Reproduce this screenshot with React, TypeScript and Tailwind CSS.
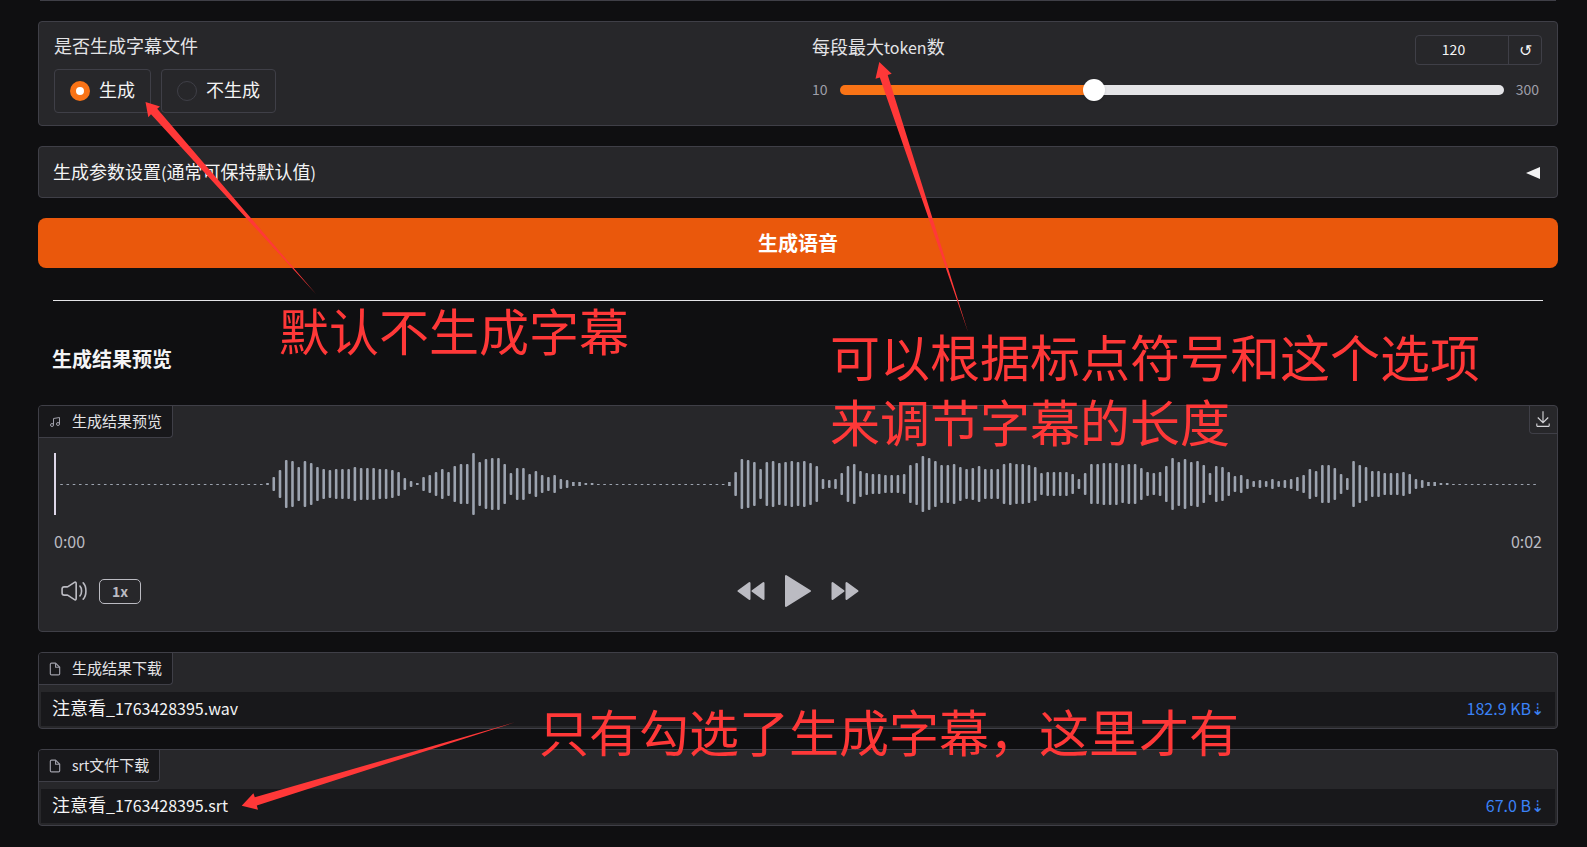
import { useState, type ReactNode } from "react";

const SILENT_HEAD = 34;
const SPEECH_A = [
  2, 14, 28, 48, 46, 34, 46, 42, 34, 30, 28, 30, 30, 30, 34, 32, 32, 32, 30, 30, 28, 24, 12, 6, 2, 14, 18, 24, 30, 24,
  36, 40, 40, 62, 44, 50, 52, 52, 40, 22, 32, 32, 20, 26, 18, 14, 18, 10, 8, 4, 4, 2, 2,
];
const SILENT_MIDDLE = 21;
const SPEECH_B = [
  4, 24, 50, 48, 44, 30, 44, 46, 42, 44, 46, 44, 46, 42, 36, 10, 8, 10, 22, 36, 40, 26, 22, 20, 20, 18, 18, 18, 20, 38,
  42, 56, 52, 46, 38, 38, 40, 34, 30, 32, 36, 30, 30, 30, 40, 42, 40, 40, 38, 34, 22, 24, 24, 24, 24, 20, 10, 22, 40,
  40, 42, 42, 42, 38, 40, 40, 32, 24, 22, 24, 36, 52, 44, 50, 44, 46, 38, 22, 36, 34, 24, 16, 18, 10, 6, 8, 6, 10, 6,
  8, 10, 14, 18, 30, 26, 38, 38, 32, 20, 12, 46, 38, 34, 26, 26, 22, 22, 22, 24, 20, 10, 8, 4, 4, 2, 2,
];
const SILENT_TAIL = 14;

const BARS: number[] = [
  ...Array<number>(SILENT_HEAD).fill(1),
  ...SPEECH_A,
  ...Array<number>(SILENT_MIDDLE).fill(1),
  ...SPEECH_B,
  ...Array<number>(SILENT_TAIL).fill(1),
];

function Waveform() {
  return (
    <svg className="block h-[62px] w-full" viewBox="0 0 1490 62" preserveAspectRatio="none" aria-hidden="true">
      {BARS.map((h, i) =>
        i === 0 ? null : (
          <rect
            key={i}
            x={6.25 * i}
            y={h === 1 ? 31 : 31 - h / 2}
            width={2.6}
            height={h}
            rx={h > 4 ? 1 : 0}
            fill="#9ca3af"
          />
        ),
      )}
      <rect x="0" y="0" width="2" height="62" fill="#ddd6e8" />
    </svg>
  );
}

function MusicIcon() {
  return (
    <svg className="size-3 text-zinc-400" viewBox="0 0 24 24" fill="none" stroke="currentColor" strokeWidth="2">
      <path d="M9 18V5l12-2v13" />
      <circle cx="6" cy="18" r="3" />
      <circle cx="18" cy="16" r="3" />
    </svg>
  );
}

function FileIcon() {
  return (
    <svg
      className="h-[14px] w-3 text-zinc-400"
      viewBox="2 0 20 24"
      fill="none"
      stroke="currentColor"
      strokeWidth="2"
      strokeLinejoin="round"
    >
      <path d="M13 2H6a2 2 0 0 0-2 2v16a2 2 0 0 0 2 2h12a2 2 0 0 0 2-2V9z" />
      <path d="M13 2v7h7" />
    </svg>
  );
}

function DownloadIcon() {
  return (
    <svg className="size-[18px]" viewBox="0 0 32 32" fill="currentColor">
      <path d="M26 24v4H6v-4H4v4a2 2 0 0 0 2 2h20a2 2 0 0 0 2-2v-4zm0-10l-1.41-1.41L17 20.17V2h-2v18.17l-7.59-7.58L6 14l10 10l10-10z" />
    </svg>
  );
}

function VolumeIcon() {
  return (
    <svg className="size-[26px]" viewBox="0 0 24 24" fill="none" stroke="currentColor" strokeWidth="1.5">
      <path d="M1 13.857V10.143C1 9.038 1.895 8.143 3 8.143h2.9c.196 0 .387-.057.55-.165l6-3.956C13.114 3.584 14 4.061 14 4.857v14.286c0 .796-.886 1.273-1.55.835l-6-3.956a1 1 0 0 0-.55-.165H3c-1.105 0-2-.895-2-2Z" />
      <path d="M17.5 7.5S19 9 19 12s-1.500 4.500-1.500 4.500" strokeLinecap="round" />
      <path d="M20.500 4.500S23 7 23 12s-2.500 7.500-2.500 7.500" strokeLinecap="round" />
    </svg>
  );
}

function RewindIcon() {
  return (
    <svg className="h-5 w-7" viewBox="0 0 28 20" fill="currentColor" stroke="currentColor" strokeWidth="2" strokeLinejoin="round">
      <path d="M12.500 2v16L1.500 10zM26.500 2v16L15.500 10z" />
    </svg>
  );
}

function ForwardIcon() {
  return (
    <svg className="h-5 w-7" viewBox="0 0 28 20" fill="currentColor" stroke="currentColor" strokeWidth="2" strokeLinejoin="round">
      <path d="M1.500 2v16l11-8zM15.500 2v16l11-8z" />
    </svg>
  );
}

function PlayIcon() {
  return (
    <svg className="h-[34px] w-[26px]" viewBox="0 0 26 34" fill="currentColor" stroke="currentColor" strokeWidth="2" strokeLinejoin="round">
      <path d="M1 2v30l24-15z" />
    </svg>
  );
}

function BlockLabel({ icon, children }: { icon: ReactNode; children: ReactNode }) {
  return (
    <h3 className="flex h-8 w-fit items-center gap-[11px] rounded-br-[4px] border-r border-b border-zinc-700 bg-zinc-900 pr-[10px] pl-[10px] text-[15px] leading-5 text-zinc-200">
      {icon}
      <span className="pb-[2px]">{children}</span>
    </h3>
  );
}

function RadioOption({ label, checked, onSelect }: { label: string; checked: boolean; onSelect: () => void }) {
  return (
    <label className="flex h-11 items-center gap-[9px] rounded-[4px] border border-zinc-700 px-[15px] text-[18px] leading-6 text-zinc-100">
      <input
        type="radio"
        name="subtitle"
        checked={checked}
        onChange={onSelect}
        className="size-5 appearance-none rounded-full border border-zinc-700 bg-transparent checked:border-[6px] checked:border-[#f97316] checked:bg-white"
      />
      <span className="pb-1">{label}</span>
    </label>
  );
}

function FileBlock({
  title,
  name,
  ext,
  size,
}: {
  title: ReactNode;
  name: string;
  ext: string;
  size: string;
}) {
  return (
    <section className="overflow-hidden rounded-[4px] border border-zinc-700 bg-zinc-800">
      <BlockLabel icon={<FileIcon />}>{title}</BlockLabel>
      <table className="mx-[2px] mt-[7px] mb-[2px] w-[calc(100%-4px)] bg-zinc-900">
        <tbody>
          <tr className="h-[34px]">
            <td className="pb-[3px] pl-[11px] text-[18px] leading-6 text-zinc-100">
              {name}
              <span className="text-[16px]">{ext}</span>
            </td>
            <td className="pr-[11px] pb-[3px] text-right text-[16px] leading-6">
              <a href="#download" className="text-[#3b82f6]">
                {size}⇣
              </a>
            </td>
          </tr>
        </tbody>
      </table>
    </section>
  );
}

function Annotations() {
  return (
    <div className="pointer-events-none absolute inset-0 overflow-hidden text-[50px] leading-[65px] whitespace-nowrap text-[#ff3838]">
      <svg className="absolute top-0 left-0" width="1587" height="847" viewBox="0 0 1587 847" fill="#ff3838" aria-hidden="true">
        <path d="M145.500 102l14.500 4.500-2.800 2.300L316 294 151 114.300l-2.700 3z" />
        <path d="M879.300 62l12.400 11.700-4 1.200L968 332 879.800 77.500l-4.300 1.300z" />
        <path d="M241.700 805.700l11.700-12.400 1.400 4L515 722.300 256.800 805.500l1.200 4.300z" />
      </svg>
      <p className="absolute top-[297px] left-[279px]">默认不生成字幕</p>
      <p className="absolute top-[323px] left-[830px]">
        可以根据标点符号和这个选项
        <br />
        来调节字幕的长度
      </p>
      <p className="absolute top-[698px] left-[539px]">只有勾选了生成字幕，这里才有</p>
    </div>
  );
}

export default function App() {
  const [subtitle, setSubtitle] = useState(true);
  const [tokens, setTokens] = useState(120);
  const fill = ((tokens - 10) / 290) * 100;

  return (
    <div className="relative min-h-screen bg-[#0f0f11] pr-[29px] pb-5 pl-[38px] font-['Noto_Sans_CJK_SC',sans-serif] text-zinc-100">
      <div className="mx-[2px] h-px bg-zinc-700" />
      <main className="flex flex-col gap-5 pt-5">
        <section className="grid grid-cols-2 rounded-[4px] border border-zinc-700 bg-zinc-800">
          <fieldset className="px-[15px] pt-[11px] pb-3">
            <legend className="float-left mb-3 w-full text-[18px] leading-6 text-zinc-200">是否生成字幕文件</legend>
            <div className="clear-both flex gap-[10px]">
              <RadioOption label="生成" checked={subtitle} onSelect={() => setSubtitle(true)} />
              <RadioOption label="不生成" checked={!subtitle} onSelect={() => setSubtitle(false)} />
            </div>
          </fieldset>
          <div className="flex flex-col pt-[13px] pr-[15px] pl-[14px]">
            <div className="flex items-start justify-between">
              <label htmlFor="tokens" className="text-[18px] leading-[22px] text-zinc-200">
                每段最大<span className="text-[16px]">token</span>数
              </label>
              <div className="flex h-[30px] rounded-[4px] border border-zinc-700 text-[14px]">
                <input
                  type="number"
                  aria-label="每段最大token数"
                  value={tokens}
                  min={10}
                  max={300}
                  onChange={(e) => setTokens(Number(e.target.value))}
                  className="w-[92px] bg-transparent pr-[10px] pb-[2px] pl-2 text-center text-zinc-100"
                />
                <button
                  type="button"
                  aria-label="重置"
                  onClick={() => setTokens(120)}
                  className="w-[33px] border-l border-zinc-700 pb-[2px] text-center text-[16px] leading-6"
                >
                  ↺
                </button>
              </div>
            </div>
            <div className="mt-[13px] flex h-6 items-center gap-3 text-[14px] leading-5 text-zinc-400">
              <span className="pb-[2px]">10</span>
              <input
                id="tokens"
                type="range"
                min={10}
                max={300}
                value={tokens}
                onChange={(e) => setTokens(Number(e.target.value))}
                style={{ backgroundImage: `linear-gradient(to right, #f97316 ${fill}%, #e4e4e7 ${fill}%)` }}
                className="h-[10px] min-w-0 flex-1 appearance-none rounded-full [&::-webkit-slider-thumb]:size-[22px] [&::-webkit-slider-thumb]:appearance-none [&::-webkit-slider-thumb]:rounded-full [&::-webkit-slider-thumb]:bg-white [&::-webkit-slider-thumb]:shadow"
              />
              <span className="pr-[3px] pb-[2px]">300</span>
            </div>
          </div>
        </section>

        <section className="rounded-[4px] border border-zinc-700 bg-zinc-800">
          <button type="button" className="flex h-[50px] w-full items-center justify-between pr-[17px] pl-[14px] text-[18px] leading-6">
            <span className="pb-[2px]">
              生成参数设置<span className="text-[16px]">(</span>通常可保持默认值<span className="text-[16px]">)</span>
            </span>
            <svg className="mt-[2px] h-3 w-[14px]" viewBox="0 0 14 12" fill="currentColor" aria-hidden="true">
              <path d="M14 0v12L0 6z" />
            </svg>
          </button>
        </section>

        <button type="button" className="h-[50px] rounded-lg bg-[#ea580c] text-[20px] leading-7 font-bold text-white">
          生成语音
        </button>

        <hr className="mx-[15px] mt-3 border-t border-zinc-200" />

        <h2 className="mt-6 px-[14px] text-[20px] leading-7 font-bold">生成结果预览</h2>

        <section className="relative mt-3 overflow-hidden rounded-[4px] border border-zinc-700 bg-zinc-800">
          <BlockLabel icon={<MusicIcon />}>生成结果预览</BlockLabel>
          <button
            type="button"
            aria-label="下载"
            className="absolute top-0 right-0 flex size-7 items-center justify-center rounded-bl-[4px] border-b border-l border-zinc-700 pr-[2px] pb-[2px] text-zinc-300"
          >
            <DownloadIcon />
          </button>
          <div className="px-[15px] pt-[15px]">
            <Waveform />
            <div className="mt-[14px] flex justify-between text-[16px] leading-6 text-[#bbbbc2]">
              <time>0:00</time>
              <time>0:02</time>
            </div>
            <div className="mt-5 grid h-10 grid-cols-3 items-center pb-1 text-[#bbbbc2]">
              <div className="flex items-center gap-3 pl-[7px]">
                <button type="button" aria-label="音量">
                  <VolumeIcon />
                </button>
                <button
                  type="button"
                  className="h-[25px] w-[42px] rounded-[5px] border border-[#bbbbc2] text-[14px] leading-5 font-bold"
                >
                  1x
                </button>
              </div>
              <div className="flex items-center justify-center gap-5">
                <button type="button" aria-label="后退">
                  <RewindIcon />
                </button>
                <button type="button" aria-label="播放">
                  <PlayIcon />
                </button>
                <button type="button" aria-label="前进">
                  <ForwardIcon />
                </button>
              </div>
            </div>
          </div>
          <div className="h-[18px]" />
        </section>

        <FileBlock title="生成结果下载" name="注意看" ext="_1763428395.wav" size="182.9 KB" />
        <FileBlock
          title={
            <>
              <span className="text-[14px]">srt</span>文件下载
            </>
          }
          name="注意看"
          ext="_1763428395.srt"
          size="67.0 B"
        />
      </main>
      <Annotations />
    </div>
  );
}
